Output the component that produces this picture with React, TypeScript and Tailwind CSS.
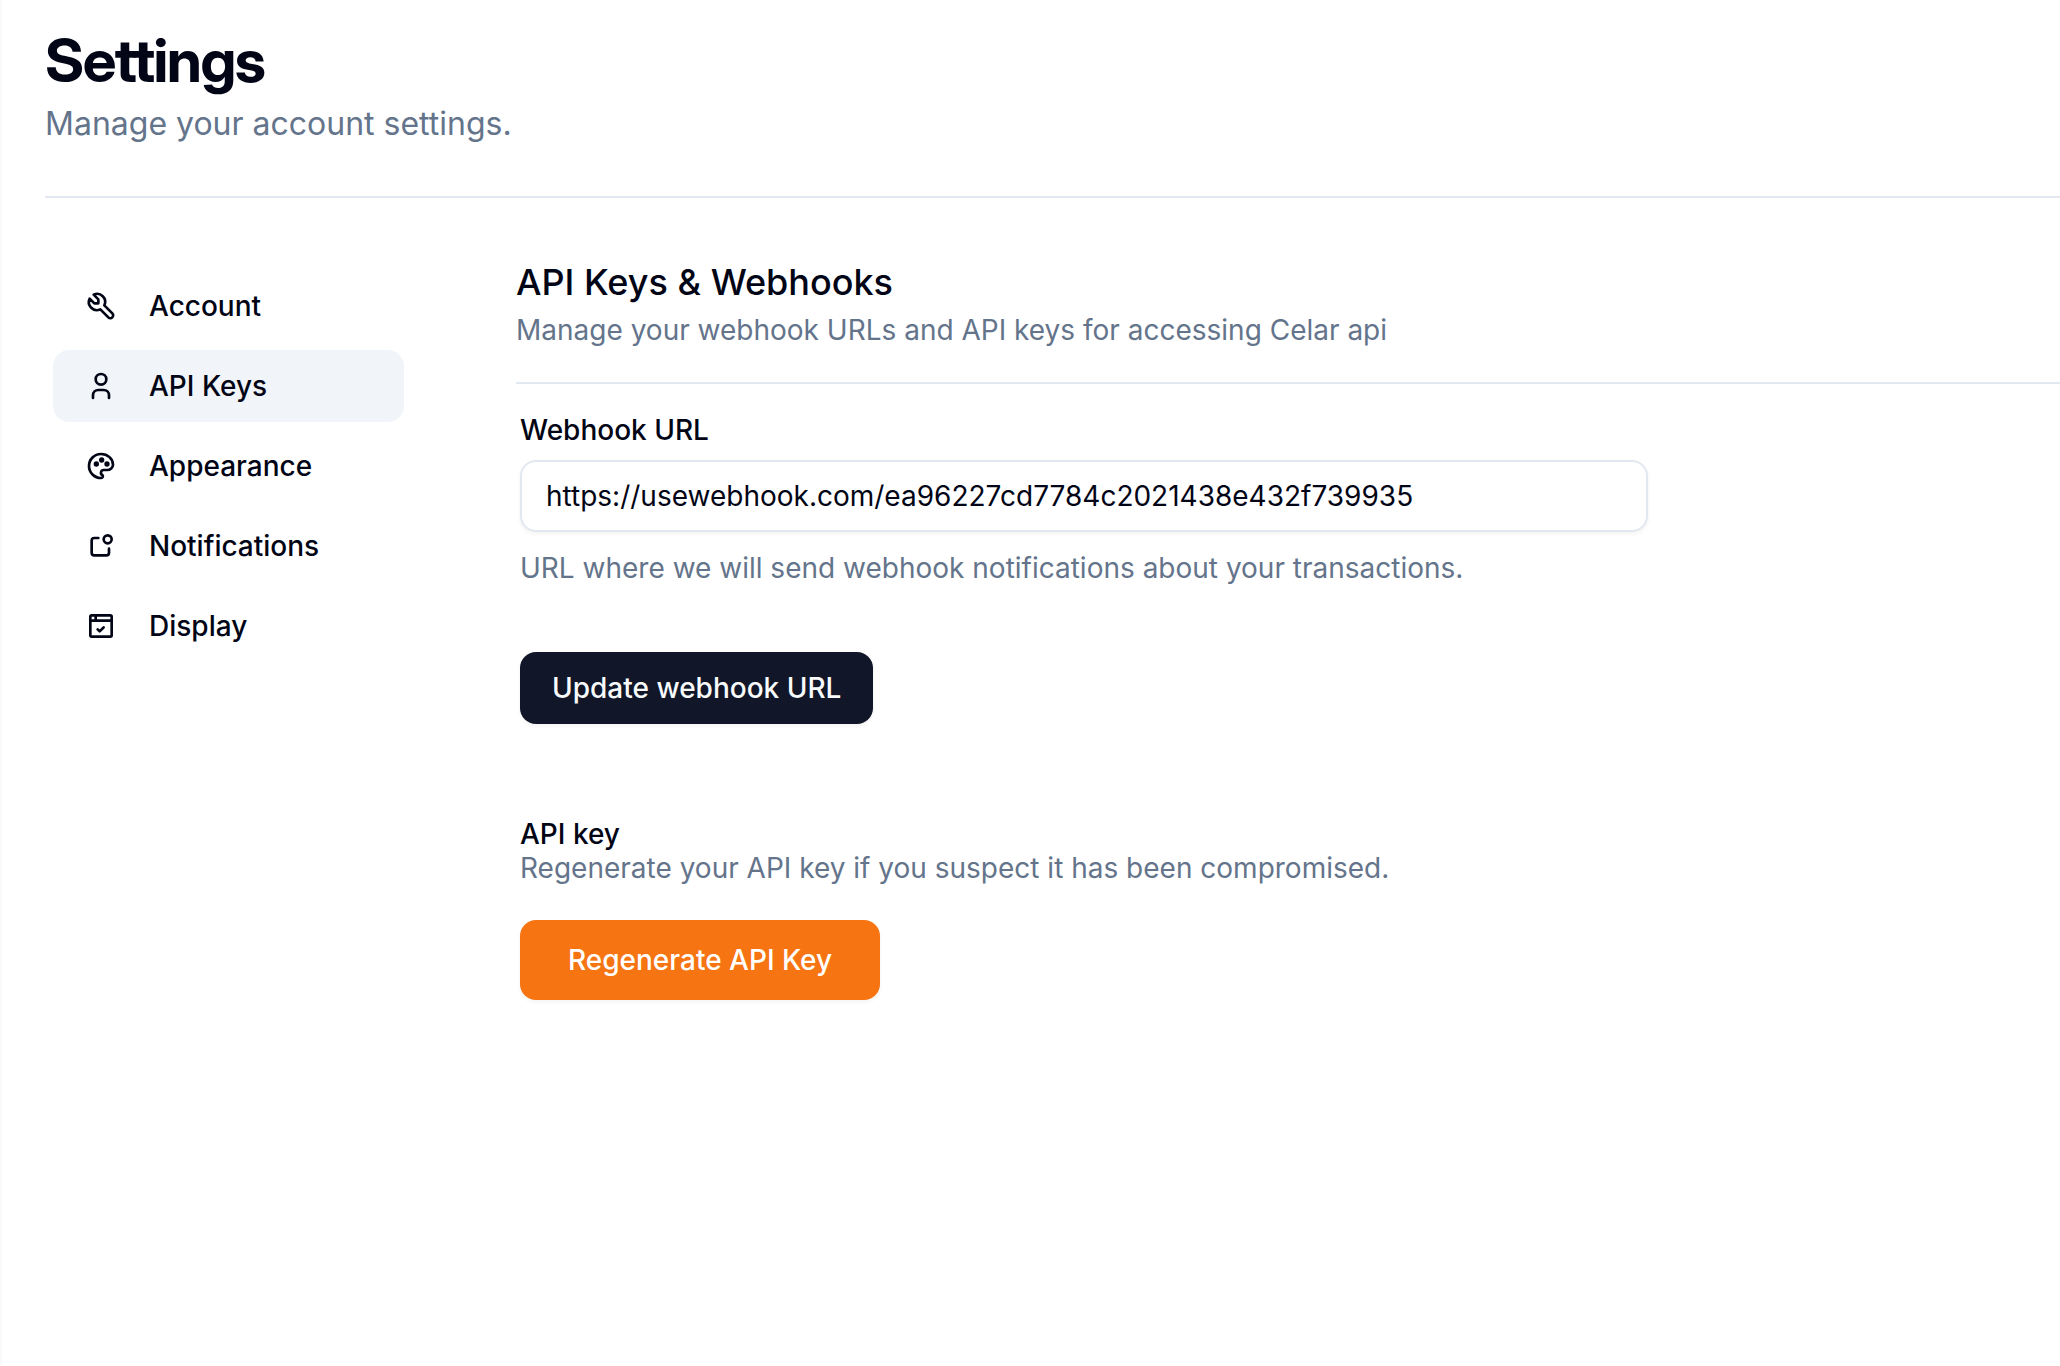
import React, { useState } from "react";

type IconProps = { children: React.ReactNode };

function Icon({ children }: IconProps) {
  return (
    <svg
      viewBox="0 0 24 24"
      fill="none"
      stroke="currentColor"
      strokeWidth={2}
      strokeLinecap="round"
      strokeLinejoin="round"
      aria-hidden="true"
      className="size-8 shrink-0"
    >
      {children}
    </svg>
  );
}

const navItems = [
  {
    title: "Account",
    icon: (
      <Icon>
        <path d="M7 10h3v-3l-3.5 -3.5a6 6 0 0 1 8 8l6 6a2 2 0 0 1 -3 3l-6 -6a6 6 0 0 1 -8 -8l3.5 3.5" />
      </Icon>
    ),
  },
  {
    title: "API Keys",
    icon: (
      <Icon>
        <path d="M8 7a4 4 0 1 0 8 0a4 4 0 0 0 -8 0" />
        <path d="M6 21v-2a4 4 0 0 1 4 -4h4a4 4 0 0 1 4 4v2" />
      </Icon>
    ),
  },
  {
    title: "Appearance",
    icon: (
      <Icon>
        <path d="M12 21a9 9 0 0 1 0 -18c4.97 0 9 3.582 9 8c0 1.06 -.474 2.078 -1.318 2.828c-.844 .75 -1.989 1.172 -3.182 1.172h-2.5a2 2 0 0 0 -1 3.75a1.3 1.3 0 0 1 -1 2.25" />
        <g fill="currentColor">
          <circle cx="8.5" cy="10.5" r="1" />
          <circle cx="12.5" cy="7.5" r="1" />
          <circle cx="16.5" cy="10.5" r="1" />
        </g>
      </Icon>
    ),
  },
  {
    title: "Notifications",
    icon: (
      <Icon>
        <path d="M10 6h-3a2 2 0 0 0 -2 2v9a2 2 0 0 0 2 2h9a2 2 0 0 0 2 -2v-3" />
        <circle cx="17" cy="7" r="3" />
      </Icon>
    ),
  },
  {
    title: "Display",
    icon: (
      <Icon>
        <rect x="4" y="4" width="16" height="16" rx="1" />
        <path d="M4 8h16" />
        <path d="M8 4v4" />
        <path d="M9.5 14.5l1.5 1.5l3 -3" />
      </Icon>
    ),
  },
];

export default function App() {
  const [url, setUrl] = useState("https://usewebhook.com/ea96227cd7784c2021438e432f739935");

  return (
    <div className="min-h-screen border-l-2 border-[#fafafa] bg-white pt-6 pl-[43px] font-['Inter',sans-serif] text-[28px] leading-10 text-[#020515]">
      <header className="border-b-2 border-[#e2e8f0] pb-12">
        <h1 className="font-['Inter_Display','Inter',sans-serif] text-[60px] leading-[72px] font-bold tracking-tight">
          Settings
        </h1>
        <p className="mt-1 text-[32px] leading-[48px] text-[#64748b]">Manage your account settings.</p>
      </header>

      <div className="flex gap-28 pl-2">
        <nav aria-label="Settings" className="mt-[72px] flex w-[351px] shrink-0 flex-col gap-2">
          {navItems.map((item) => (
            <a
              key={item.title}
              href="#"
              aria-current={item.title === "API Keys" ? "page" : undefined}
              className="flex h-[72px] items-center gap-8 rounded-2xl px-8 font-medium aria-[current=page]:bg-[#f1f5f9]"
            >
              {item.icon}
              {item.title}
            </a>
          ))}
        </nav>

        <main className="mt-14 min-w-0 flex-1">
          <div className="border-b-2 border-[#e2e8f0] pb-8">
            <h2 className="text-[36px] leading-[56px] font-medium">API Keys &amp; Webhooks</h2>
            <p className="text-[#64748b]">Manage your webhook URLs and API keys for accessing Celar api</p>
          </div>

          <div className="max-w-[1136px] px-1 pt-8">
            <form onSubmit={(e) => e.preventDefault()}>
              <label htmlFor="webhook-url" className="block leading-7 font-medium">
                Webhook URL
              </label>
              <input
                id="webhook-url"
                type="text"
                value={url}
                onChange={(e) => setUrl(e.target.value)}
                aria-describedby="webhook-help"
                className="mt-4 block h-[72px] w-full rounded-2xl border-2 border-[#e2e8f0] bg-white px-6 shadow-[0_2px_4px_rgba(0,0,0,0.05)]"
              />
              <p id="webhook-help" className="mt-4 text-[#64748b]">
                URL where we will send webhook notifications about your transactions.
              </p>
              <button
                type="submit"
                className="mt-16 flex h-[72px] items-center rounded-2xl bg-[#111729] px-8 font-medium text-[#f8fafc] shadow-[0_2px_4px_rgba(0,0,0,0.05)]"
              >
                Update webhook URL
              </button>
            </form>

            <section className="mt-24">
              <h3 className="leading-7 font-medium">API key</h3>
              <p className="text-[#64748b]">Regenerate your API key if you suspect it has been compromised.</p>
              <button
                type="button"
                className="mt-8 flex h-20 items-center rounded-2xl bg-[#f67412] px-12 font-medium text-white shadow-[0_2px_4px_rgba(0,0,0,0.05)]"
              >
                Regenerate API Key
              </button>
            </section>
          </div>
        </main>
      </div>
    </div>
  );
}
